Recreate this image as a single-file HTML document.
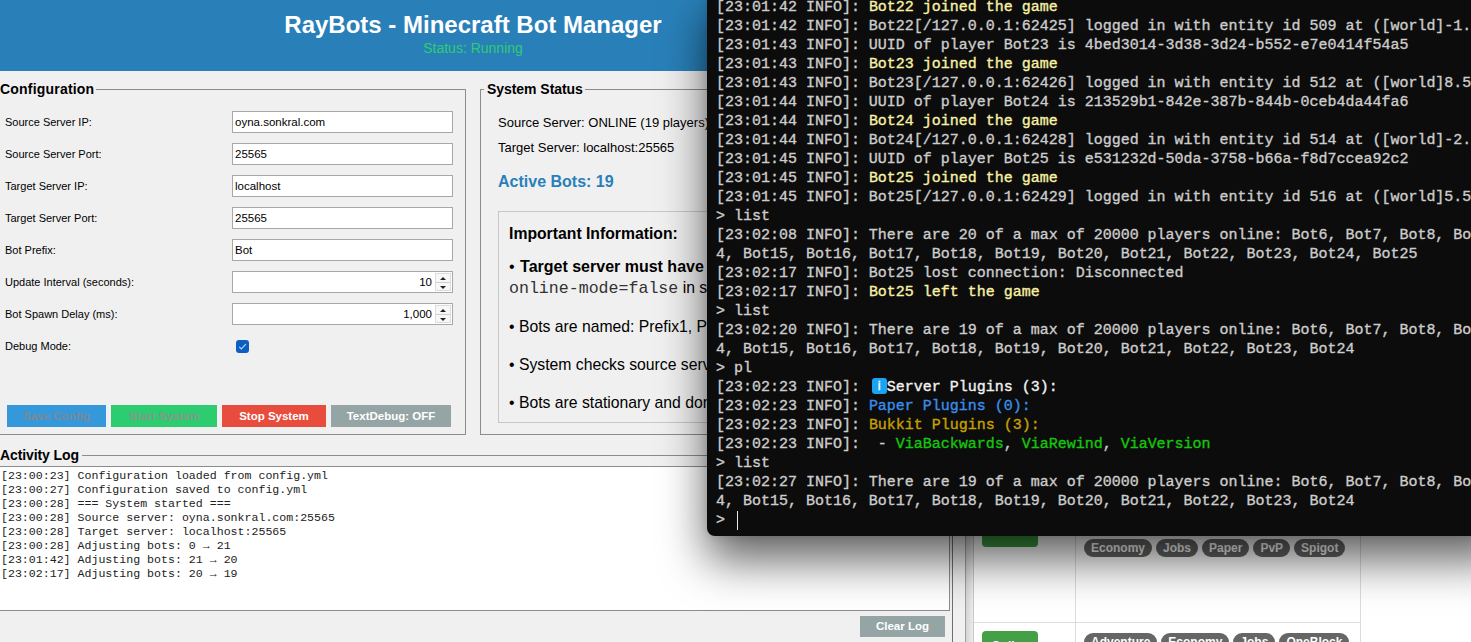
<!DOCTYPE html>
<html><head><meta charset="utf-8">
<style>
*{margin:0;padding:0;box-sizing:border-box}
html,body{width:1471px;height:642px;overflow:hidden;background:#fff;font-family:"Liberation Sans",sans-serif}
.a{position:absolute}
#app{left:0;top:0;width:953px;height:642px;background:#f0f0f0}
#hdr{left:0;top:0;width:720px;height:71px;background:#2980b9}
#title{left:0;width:946px;top:11px;text-align:center;color:#fff;font:bold 24px "Liberation Sans",sans-serif;white-space:nowrap}
#status{left:0;width:946px;top:40px;text-align:center;color:#2ecc71;font:14px "Liberation Sans",sans-serif;white-space:nowrap}
.leg{font:bold 14px "Liberation Sans",sans-serif;color:#000;white-space:nowrap;background:#f0f0f0}
.hl{height:1px;background:#8c8c8c}
.vl{width:1px;background:#8c8c8c}
.lbl{left:5px;font:11px "Liberation Sans",sans-serif;color:#000;white-space:nowrap}
.inp{left:232px;width:221px;height:22px;background:#fff;border:1px solid #a8a8a8}
.inp span{position:absolute;left:2px;top:4px;font:11.5px "Liberation Sans",sans-serif;color:#000;white-space:nowrap}
.btn{height:22px;top:405px;font:bold 11.5px "Liberation Sans",sans-serif;text-align:center;line-height:22px;white-space:nowrap}
.st{font:13px "Liberation Sans",sans-serif;color:#000;white-space:nowrap}
.info{font:15.75px "Liberation Sans",sans-serif;color:#000;white-space:nowrap}
.log{left:1px;font:11.6px "Liberation Mono",monospace;color:#222;white-space:pre;line-height:14px}
#term{left:707px;top:-10px;width:800px;height:546px;background:#0c0c0c;border-radius:8px;box-shadow:0 0 8px rgba(0,0,0,0.12),0 24px 46px rgba(0,0,0,0.62)}
#tt{left:716px;top:-2px;font:14.99px "Liberation Mono",monospace;color:#cccccc;-webkit-text-stroke:0.35px currentColor;white-space:pre;line-height:19px}
.tags{white-space:nowrap;font-size:0}
.tags span{display:inline-block;height:18px;padding:0 7px;margin-right:4px;border-radius:9px;background:#666;color:#fff;font:bold 12px "Liberation Sans",sans-serif;line-height:19px;vertical-align:top}
.y{color:#f9f1a5}
.b{color:#3b8eea}
.o{color:#c8a000}
.g{color:#16c60c}
.w{color:#f2f2f2}
.ic{display:inline-block;width:17.94px;height:19px;position:relative;vertical-align:top}
.ic i{position:absolute;left:2.7px;top:0;width:15.5px;height:15.5px;background:#1aa3f0;border-radius:3px;color:#fff;font:13px "Liberation Sans",sans-serif;font-style:normal;text-align:center;line-height:15px}
.cur{display:inline-block;width:1.5px;height:19px;background:#e8e8e8;vertical-align:top;margin-left:3px}
.spin{position:absolute;right:1px;top:1px;width:16px;height:18px;border:1px solid #dcdcdc;background:#f7f7f7}
.spin:before{content:"";position:absolute;left:3.5px;top:2.5px;border:3px solid transparent;border-top:none;border-bottom:3.5px solid #222;width:0;height:0}
.spin:after{content:"";position:absolute;left:3.5px;top:11.5px;border:3px solid transparent;border-bottom:none;border-top:3.5px solid #222;width:0;height:0}
.spin i{position:absolute;left:0;top:8px;width:14px;height:1px;background:#d0d0d0}
</style></head><body>
<div id="app" class="a">
  <div id="hdr" class="a"></div>
  <div id="title" class="a">RayBots - Minecraft Bot Manager</div>
  <div id="status" class="a">Status: Running</div>

  <!-- Configuration fieldset -->
  <div class="a hl" style="left:0;top:89px;width:466px"></div>
  <div class="a vl" style="left:465px;top:89px;height:346px"></div>
  <div class="a hl" style="left:0;top:434px;width:466px"></div>
  <div class="a leg" style="left:0;top:81px;padding-right:2px;letter-spacing:0.2px">Configuration</div>

  <div class="a lbl" style="top:116px">Source Server IP:</div>
  <div class="a lbl" style="top:148px">Source Server Port:</div>
  <div class="a lbl" style="top:180px">Target Server IP:</div>
  <div class="a lbl" style="top:212px">Target Server Port:</div>
  <div class="a lbl" style="top:244px">Bot Prefix:</div>
  <div class="a lbl" style="top:276px">Update Interval (seconds):</div>
  <div class="a lbl" style="top:308px">Bot Spawn Delay (ms):</div>
  <div class="a lbl" style="top:340px">Debug Mode:</div>

  <div class="a inp" style="top:111px"><span>oyna.sonkral.com</span></div>
  <div class="a inp" style="top:143px"><span>25565</span></div>
  <div class="a inp" style="top:175px"><span>localhost</span></div>
  <div class="a inp" style="top:207px"><span>25565</span></div>
  <div class="a inp" style="top:239px"><span>Bot</span></div>
  <div class="a inp" style="top:271px"><span style="left:auto;right:20px">10</span><div class="spin"><i></i></div></div>
  <div class="a inp" style="top:303px"><span style="left:auto;right:20px">1,000</span><div class="spin"><i></i></div></div>

  <div class="a" style="left:236px;top:340px;width:13px;height:13px;background:#0a5fc0;border-radius:3px">
    <svg width="13" height="13" style="position:absolute;left:0;top:0"><path d="M3.2 6.8 L5.4 9 L9.8 4.2" stroke="#b5d5fa" stroke-width="1.2" fill="none"/></svg>
  </div>

  <div class="a btn" style="left:7px;width:99px;background:#3498db;color:#7a8a96">Save Config</div>
  <div class="a btn" style="left:111px;width:106px;background:#2ecc71;color:#7f9a88">Start System</div>
  <div class="a btn" style="left:222px;width:104px;background:#e74c3c;color:#fff">Stop System</div>
  <div class="a btn" style="left:331px;width:120px;background:#95a5a6;color:#fff">TextDebug: OFF</div>

  <!-- System Status fieldset -->
  <div class="a hl" style="left:480px;top:89px;width:240px"></div>
  <div class="a vl" style="left:480px;top:89px;height:346px"></div>
  <div class="a hl" style="left:480px;top:434px;width:240px"></div>
  <div class="a leg" style="left:484px;top:81px;padding:0 2px 0 3px;letter-spacing:-0.05px">System Status</div>
  <div class="a st" style="left:498px;top:115px">Source Server: ONLINE (19 players)</div>
  <div class="a st" style="left:498px;top:140px">Target Server: localhost:25565</div>
  <div class="a" style="left:498px;top:173px;font:bold 16px 'Liberation Sans',sans-serif;color:#2980b9;white-space:nowrap">Active Bots: 19</div>

  <div class="a" style="left:498px;top:211px;width:240px;height:212px;border:1px solid #c8c8c8"></div>
  <div class="a info" style="left:509px;top:225px;font-weight:bold">Important Information:</div>
  <div class="a info" style="left:509px;top:258px;font-size:16px">• <b style="margin-left:1px">Target server must have</b></div>
  <div class="a info" style="left:509px;top:279px"><span style="font:16.6px 'Liberation Mono',monospace;color:#333">online-mode=false</span> in server.properties</div>
  <div class="a info" style="left:509px;top:318px">• Bots are named: Prefix1, Prefix2</div>
  <div class="a info" style="left:509px;top:356px">• System checks source server</div>
  <div class="a info" style="left:509px;top:394px">• Bots are stationary and don't move</div>

  <!-- Activity Log -->
  <div class="a hl" style="left:0;top:455px;width:950px"></div>
  <div class="a leg" style="left:0;top:447px;padding-right:3px;letter-spacing:-0.1px">Activity Log</div>
  <div class="a" style="left:-2px;top:466px;width:952px;height:145px;background:#fff;border:1px solid #8c8c8c"></div>
  <div class="a log" style="top:469px">[23:00:23] Configuration loaded from config.yml
[23:00:27] Configuration saved to config.yml
[23:00:28] === System started ===
[23:00:28] Source server: oyna.sonkral.com:25565
[23:00:28] Target server: localhost:25565
[23:00:28] Adjusting bots: 0 <b>→</b> 21
[23:01:42] Adjusting bots: 21 <b>→</b> 20
[23:02:17] Adjusting bots: 20 <b>→</b> 19</div>
  <div class="a btn" style="left:860px;top:616px;width:85px;height:21px;line-height:21px;background:#95a5a6;color:#fff">Clear Log</div>
  <div class="a vl" style="left:952px;top:0;height:642px;background:#707070"></div>
</div>

<!-- Browser behind -->
<div class="a" style="left:953px;top:0;width:518px;height:642px;background:#fff"></div>
<div class="a" style="left:953px;top:0;width:12px;height:642px;background:#f0f0f0"></div>
<div class="a vl" style="left:965px;top:0;height:642px;background:#a0a0a0"></div>
<div class="a" style="left:966px;top:0;width:7px;height:642px;background:linear-gradient(to right,#d4d4d4,#ececec)"></div>
<div class="a vl" style="left:973px;top:0;height:642px;background:#c8c8c8"></div>
<div class="a vl" style="left:1075px;top:0;height:642px;background:#dcdcdc"></div>
<div class="a vl" style="left:1360px;top:0;height:642px;background:#dcdcdc"></div>
<div class="a hl" style="left:966px;top:622px;width:395px;background:#dcdcdc"></div>
<div class="a" style="left:982px;top:520px;width:56px;height:27px;background:#3b9b40;border-radius:4px"></div>
<div class="a" style="left:982px;top:631px;width:56px;height:27px;background:#43a047;border-radius:4px;color:#fff;font:bold 12px 'Liberation Sans',sans-serif;text-align:center;line-height:30px">Online</div>
<div class="a tags" style="left:1084px;top:539px"><span>Economy</span><span>Jobs</span><span>Paper</span><span>PvP</span><span>Spigot</span></div>
<div class="a tags" style="left:1084px;top:633px"><span>Adventure</span><span>Economy</span><span>Jobs</span><span>OneBlock</span></div>

<!-- Terminal -->
<div id="term" class="a"></div>
<div id="tt" class="a">[23:01:42 INFO]: <span class="y">Bot22 joined the game</span>
[23:01:42 INFO]: Bot22[/127.0.0.1:62425] logged in with entity id 509 at ([world]-1.5
[23:01:43 INFO]: UUID of player Bot23 is 4bed3014-3d38-3d24-b552-e7e0414f54a5
[23:01:43 INFO]: <span class="y">Bot23 joined the game</span>
[23:01:43 INFO]: Bot23[/127.0.0.1:62426] logged in with entity id 512 at ([world]8.5
[23:01:44 INFO]: UUID of player Bot24 is 213529b1-842e-387b-844b-0ceb4da44fa6
[23:01:44 INFO]: <span class="y">Bot24 joined the game</span>
[23:01:44 INFO]: Bot24[/127.0.0.1:62428] logged in with entity id 514 at ([world]-2.5
[23:01:45 INFO]: UUID of player Bot25 is e531232d-50da-3758-b66a-f8d7ccea92c2
[23:01:45 INFO]: <span class="y">Bot25 joined the game</span>
[23:01:45 INFO]: Bot25[/127.0.0.1:62429] logged in with entity id 516 at ([world]5.5
&gt; list
[23:02:08 INFO]: There are 20 of a max of 20000 players online: Bot6, Bot7, Bot8, Bot
4, Bot15, Bot16, Bot17, Bot18, Bot19, Bot20, Bot21, Bot22, Bot23, Bot24, Bot25
[23:02:17 INFO]: Bot25 lost connection: Disconnected
[23:02:17 INFO]: <span class="y">Bot25 left the game</span>
&gt; list
[23:02:20 INFO]: There are 19 of a max of 20000 players online: Bot6, Bot7, Bot8, Bot
4, Bot15, Bot16, Bot17, Bot18, Bot19, Bot20, Bot21, Bot22, Bot23, Bot24
&gt; pl
[23:02:23 INFO]: <span class="ic"><i>i</i></span><span class="w">Server Plugins (3):</span>
[23:02:23 INFO]: <span class="b">Paper Plugins (0):</span>
[23:02:23 INFO]: <span class="o">Bukkit Plugins (3):</span>
[23:02:23 INFO]:  - <span class="g">ViaBackwards</span>, <span class="g">ViaRewind</span>, <span class="g">ViaVersion</span>
&gt; list
[23:02:27 INFO]: There are 19 of a max of 20000 players online: Bot6, Bot7, Bot8, Bot
4, Bot15, Bot16, Bot17, Bot18, Bot19, Bot20, Bot21, Bot22, Bot23, Bot24
&gt; <span class="cur"></span></div>
</body></html>
